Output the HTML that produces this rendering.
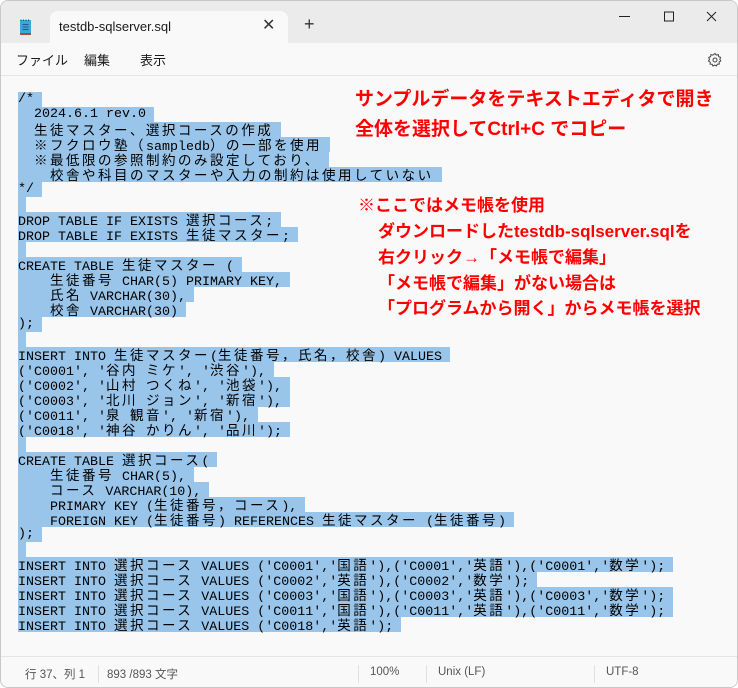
<!DOCTYPE html>
<html><head><meta charset="utf-8">
<style>
*{margin:0;padding:0;box-sizing:border-box}
body{width:738px;height:688px;background:#fff;overflow:hidden;font-family:"Liberation Sans","Noto Sans CJK JP",sans-serif;position:relative}
.win{position:absolute;left:0;top:0;width:738px;height:688px;background:#f9f9f9;border:1px solid #c8c8c8;border-radius:8px;overflow:hidden}
.title{position:absolute;left:0;top:0;width:738px;height:42px;background:#ebebeb}
.tab{position:absolute;left:49px;top:10px;width:238px;height:34px;background:#f9f9f9;border-radius:8px 8px 0 0}
.tab .t{position:absolute;left:9px;top:8px;font-size:13px;color:#1a1a1a}
.tab .x{position:absolute;left:212px;top:4px;font-size:16px;color:#333}
.plus{position:absolute;left:303px;top:13px;font-size:18px;color:#333}
.menu{position:absolute;left:0;top:42px;width:738px;height:33px;background:#f9f9f9;border-bottom:1px solid #e5e5e5;font-size:13px;color:#1a1a1a}
.menu span{position:absolute;top:7px}
.ed{position:absolute;left:17px;top:91px;font-family:"Liberation Mono",monospace;font-size:13.33px;line-height:15px;color:#000}
.ed div{height:15px;white-space:pre}
.ed b{font-weight:normal;background:#99c5ea;display:inline-block;height:15px;padding-right:8px;vertical-align:top;white-space:pre}
.j{font-family:"Noto Sans CJK JP",sans-serif;font-size:13.5px;letter-spacing:2.5px}
.red{position:absolute;color:#f00;font-family:"Liberation Sans","Noto Sans CJK JP",sans-serif;white-space:nowrap}
.status{position:absolute;left:0;top:655px;width:738px;height:33px;border-top:1px solid #e5e5e5;background:#f9f9f9;font-size:11.5px;color:#555}
.status span{position:absolute;top:9px}
.sep{position:absolute;top:8px;width:1px;height:18px;background:#e0e0e0}
</style></head><body>
<div class="win">
<div class="title">
 <svg style="position:absolute;left:18px;top:17px" width="14" height="18" viewBox="0 0 14 18"><rect x="1" y="2" width="11" height="14" fill="#3ba6dc"/><rect x="1" y="15" width="11" height="2" fill="#a0522d"/><path d="M3.5 6.5h6M3.5 9h6M3.5 11.5h6" stroke="#1c5f8c" stroke-width="1"/><path d="M2 1.5v1.5M4.5 1.5v1.5M7 1.5v1.5M9.5 1.5v1.5" stroke="#1c5f8c" stroke-width="1"/></svg>
 <div class="tab"><span class="t">testdb-sqlserver.sql</span><span class="x">✕</span></div>
 <span class="plus">+</span>
 <svg style="position:absolute;left:618px;top:10px" width="110" height="16"><path d="M0 5.5h11" stroke="#222" stroke-width="1"/><rect x="45.5" y="1" width="9" height="9" fill="none" stroke="#222"/><path d="M88 1l9 9M97 1l-9 9" stroke="#222"/></svg>
</div>
<div class="menu"><span style="left:15px">ファイル</span><span style="left:83px">編集</span><span style="left:139px">表示</span>
 <svg style="position:absolute;left:706px;top:9px" width="16" height="16" viewBox="0 0 16 16"><path d="M8 1.5l1.3 1.6 2-.5.4 2 1.9.8-.8 1.9 1 1.7-1.7 1 .2 2-2 .2-1 1.8-1.8-.9L6 14l-.9-1.8-2 -.1.1-2-1.7-1.1 1-1.7-.8-1.9 1.9-.8.4-2 2 .5z" fill="none" stroke="#444" stroke-width="1"/><circle cx="8" cy="8" r="2" fill="none" stroke="#444"/></svg>
</div>
<div class="ed"><div><b>/*</b></div><div><b>  2024.6.1 rev.0</b></div><div><b>  <span class="j">生徒マスター、選択コースの作成</span></b></div><div><b>  <span class="j">※フクロウ塾（</span>sampledb<span class="j">）の一部を使用</span></b></div><div><b>  <span class="j">※最低限の参照制約のみ設定しており、</span></b></div><div><b>    <span class="j">校舎や科目のマスターや入力の制約は使用していない</span></b></div><div><b>*/</b></div><div><b></b></div><div><b>DROP TABLE IF EXISTS <span class="j">選択コース</span>;</b></div><div><b>DROP TABLE IF EXISTS <span class="j">生徒マスター</span>;</b></div><div><b></b></div><div><b>CREATE TABLE <span class="j">生徒マスター</span> (</b></div><div><b>    <span class="j">生徒番号</span> CHAR(5) PRIMARY KEY,</b></div><div><b>    <span class="j">氏名</span> VARCHAR(30),</b></div><div><b>    <span class="j">校舎</span> VARCHAR(30)</b></div><div><b>);</b></div><div><b></b></div><div><b>INSERT INTO <span class="j">生徒マスター</span>(<span class="j">生徒番号，氏名，校舎</span>) VALUES</b></div><div><b>('C0001', '<span class="j">谷内</span> <span class="j">ミケ</span>', '<span class="j">渋谷</span>'),</b></div><div><b>('C0002', '<span class="j">山村</span> <span class="j">つくね</span>', '<span class="j">池袋</span>'),</b></div><div><b>('C0003', '<span class="j">北川</span> <span class="j">ジョン</span>', '<span class="j">新宿</span>'),</b></div><div><b>('C0011', '<span class="j">泉</span> <span class="j">観音</span>', '<span class="j">新宿</span>'),</b></div><div><b>('C0018', '<span class="j">神谷</span> <span class="j">かりん</span>', '<span class="j">品川</span>');</b></div><div><b></b></div><div><b>CREATE TABLE <span class="j">選択コース</span>(</b></div><div><b>    <span class="j">生徒番号</span> CHAR(5),</b></div><div><b>    <span class="j">コース</span> VARCHAR(10),</b></div><div><b>    PRIMARY KEY (<span class="j">生徒番号，コース</span>),</b></div><div><b>    FOREIGN KEY (<span class="j">生徒番号</span>) REFERENCES <span class="j">生徒マスター</span> (<span class="j">生徒番号</span>)</b></div><div><b>);</b></div><div><b></b></div><div><b>INSERT INTO <span class="j">選択コース</span> VALUES ('C0001','<span class="j">国語</span>'),('C0001','<span class="j">英語</span>'),('C0001','<span class="j">数学</span>');</b></div><div><b>INSERT INTO <span class="j">選択コース</span> VALUES ('C0002','<span class="j">英語</span>'),('C0002','<span class="j">数学</span>');</b></div><div><b>INSERT INTO <span class="j">選択コース</span> VALUES ('C0003','<span class="j">国語</span>'),('C0003','<span class="j">英語</span>'),('C0003','<span class="j">数学</span>');</b></div><div><b>INSERT INTO <span class="j">選択コース</span> VALUES ('C0011','<span class="j">国語</span>'),('C0011','<span class="j">英語</span>'),('C0011','<span class="j">数学</span>');</b></div><div><b>INSERT INTO <span class="j">選択コース</span> VALUES ('C0018','<span class="j">英語</span>');</b></div></div>
<div class="red" style="left:354px;top:84px;font-size:19px;line-height:30px;font-weight:bold">サンプルデータをテキストエディタで開き<br>全体を選択してCtrl+C でコピー</div>
<div class="red" style="left:357px;top:192px;font-size:17px;line-height:25.75px;font-weight:bold">※ここではメモ帳を使用</div>
<div class="red" style="left:377px;top:218px;font-size:17px;line-height:25.75px;font-weight:bold">ダウンロードしたtestdb-sqlserver.sqlを<br>右クリック→「メモ帳で編集」<br>「メモ帳で編集」がない場合は<br>「プログラムから開く」からメモ帳を選択</div>
<div class="status">
 <span style="left:24px">行 37、列 1</span><div class="sep" style="left:97px"></div>
 <span style="left:106px">893 /893 文字</span><div class="sep" style="left:357px"></div>
 <span style="left:369px">100%</span><div class="sep" style="left:425px"></div>
 <span style="left:437px">Unix (LF)</span><div class="sep" style="left:593px"></div>
 <span style="left:605px">UTF-8</span>
</div>
</div>
</body></html>
